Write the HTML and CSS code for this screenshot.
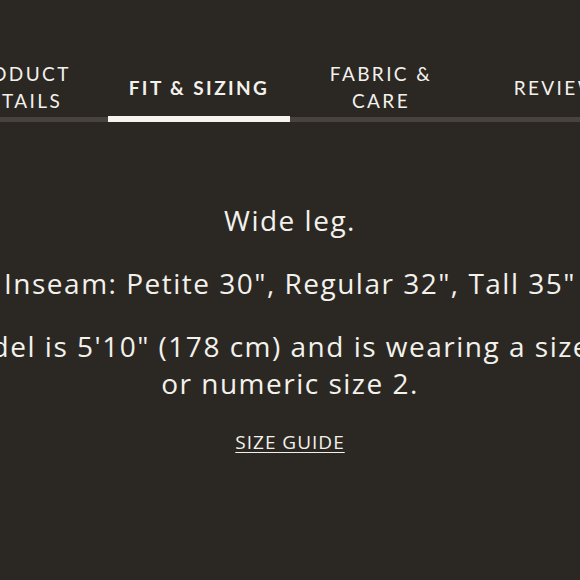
FILE: index.html
```html
<!DOCTYPE html>
<html lang="en">
<head>
    <meta charset="UTF-8">
    <meta name="viewport" content="width=device-width, initial-scale=1.0">
    <title>Fit &amp; Sizing</title>
    <link rel="stylesheet" href="styles.css">
</head>
<body>
    <div class="page">
        <nav class="tabs">
            <div class="tab">Product<br>Details</div>
            <div class="tab active">Fit &amp; Sizing</div>
            <div class="tab">Fabric &amp;<br>Care</div>
            <div class="tab">Reviews</div>
        </nav>

        <section class="panel">
            <p>Wide leg.</p>
            <p>Inseam: Petite 30", Regular 32", Tall 35"</p>
            <p>Model is 5'10" (178 cm) and is wearing a size XS or numeric size 2.</p>
            <a class="size-guide" href="#">Size Guide</a>
        </section>
    </div>
</body>
</html>
```

FILE: styles.css
```css
html, body {
    margin: 0;
    padding: 0;
    background-color: #2b2823;
    overflow: hidden;
}

body {
    width: 580px;
    height: 580px;
    font-family: "Open Sans", sans-serif;
    color: #f3f1ec;
}

.page {
    width: 728px;
    margin-left: -74px;
}

.tabs {
    display: flex;
    height: 60px;
    padding-top: 57px;
    border-bottom: 5px solid #48433f;
}

.tab {
    width: 182px;
    display: flex;
    align-items: center;
    justify-content: center;
    text-align: center;
    text-transform: uppercase;
    font-family: Lato, sans-serif;
    font-size: 19px;
    line-height: 27px;
    letter-spacing: 2.4px;
    position: relative;
}

.tab.active {
    font-weight: bold;
}

.tab.active::after {
    content: "";
    position: absolute;
    left: 0;
    right: 0;
    bottom: -5px;
    height: 6px;
    background: #f5f3ee;
}

.panel {
    display: flex;
    flex-direction: column;
    align-items: center;
    padding: 0 20px;
    text-align: center;
    font-size: 28px;
    line-height: 37px;
    letter-spacing: 1.5px;
}

.panel p {
    margin: 0 0 26px;
}

.panel p:first-child {
    margin-top: 80px;
}

.size-guide {
    margin-top: -4px;
    font-size: 19px;
    letter-spacing: 1px;
    text-transform: uppercase;
    color: #f3f1ec;
    text-decoration: underline;
    text-underline-offset: 3px;
}
```
